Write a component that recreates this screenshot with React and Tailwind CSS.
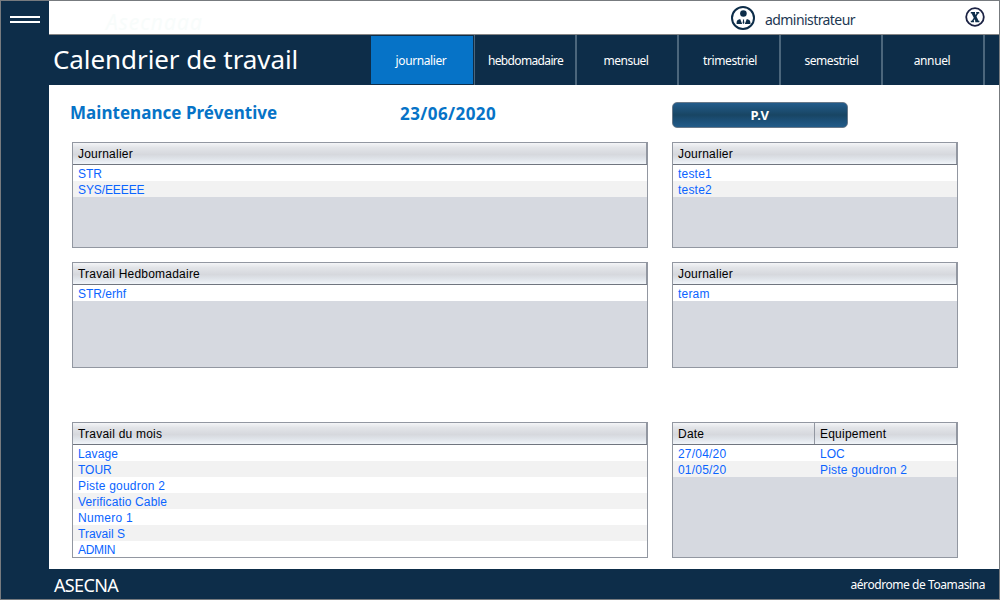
import React from "react";

const tabs = [
  { label: "hebdomadaire", style: "pl-px tracking-[-0.65px]" },
  { label: "mensuel", style: "pr-0.5 tracking-[-0.5px]" },
  { label: "trimestriel", style: "pl-0.5 tracking-[-0.4px]" },
  { label: "semestriel", style: "pl-px tracking-[-0.45px]" },
  { label: "annuel", style: "pr-0.5 tracking-[-0.4px]" },
];

function Table({ columns, rows, className }) {
  return (
    <section
      className={`flex flex-col overflow-hidden border border-[#9297a1] bg-[#d6d9e0] font-['Liberation_Sans',sans-serif] text-xs ${className}`}
    >
      <div className="flex h-[22px] shrink-0 border-b border-[#70757f] bg-[linear-gradient(#f4f5f7_0%,#e2e4e8_22%,#d6d8dd_55%,#dfe3e9_75%,#f1f5f9_100%)]">
        {columns.map((c) => (
          <div
            key={c.label}
            className={`flex items-center border-r border-[#9297a1] pt-px pl-[5px] leading-5 tracking-[0.22px] whitespace-nowrap text-black ${c.width}`}
          >
            {c.label}
          </div>
        ))}
      </div>
      {rows.map((row, i) => (
        <div key={i} className={`flex h-4 shrink-0 ${i % 2 ? "bg-[#f2f2f2]" : "bg-white"}`}>
          {row.map((cell, j) => (
            <div
              key={j}
              className={`pt-px pl-[5px] leading-4 whitespace-nowrap text-[#0a64ff] ${columns[j].width} ${cell.tracking}`}
            >
              {cell.text}
            </div>
          ))}
        </div>
      ))}
    </section>
  );
}

const t = (text, tracking = "tracking-[0.2px]") => ({ text, tracking });

function UserIcon() {
  return (
    <svg width="24" height="24" viewBox="0 0 24 24" className="shrink-0">
      <circle cx="12" cy="12" r="11" fill="white" stroke="#0d2d49" strokeWidth="2" />
      <circle cx="12.4" cy="7.5" r="3.3" fill="#0d2d49" />
      <path d="M5.6 18v-1.6c0-2 1.8-2.8 3.6-3.3l2 4.9zM19.4 18v-1.6c0-2-1.8-2.8-3.6-3.3l-2 4.9zM11.9 13.5h1.2l-.1 1 .4 2.6-.9.9-.9-.9.4-2.6z" fill="#0d2d49" />
    </svg>
  );
}

function CloseIcon() {
  return (
    <svg width="20" height="20" viewBox="0 0 20 20" className="shrink-0">
      <circle cx="10" cy="10" r="8.8" fill="white" stroke="#1c2344" strokeWidth="1.8" />
      <path d="M5.8 5.8h4.2M11.2 5.8h3M5.8 14.4h3.2M10.4 14.4h4" stroke="#0d2d49" strokeWidth="1.5" />
      <path d="M8 5.8l4.2 8.6" stroke="#0d2d49" strokeWidth="3" />
      <path d="M12.8 5.8L7.4 14.4" stroke="#0d2d49" strokeWidth="1.5" />
    </svg>
  );
}

export default function App() {
  return (
    <div className="flex h-[600px] w-[1000px] flex-col overflow-hidden border border-[#777b7f] bg-white font-['Noto_Sans',sans-serif]">
      <div className="flex min-h-0 flex-1">
        <aside className="flex w-12 shrink-0 flex-col gap-[3px] bg-[#0d2d49] pt-[15px] pl-[9px]">
          <span className="h-0.5 w-[30px] bg-white" />
          <span className="h-0.5 w-[30px] bg-white" />
        </aside>
        <div className="flex min-w-0 flex-1 flex-col">
          <header className="flex h-[34px] shrink-0 border-b border-[#858585]">
            <div className="w-[682px] pt-[7px] pl-[57px] text-[21px] leading-7 tracking-[1px] text-[#f8fcfb] italic">Asecnaaa</div>
            <div className="flex flex-1 pt-[5px]">
              <UserIcon />
              <span className="pt-1 pl-[10px] text-sm leading-5 tracking-[-0.57px] text-[#1d3852]">administrateur</span>
            </div>
            <div className="w-[34px] pt-[6px]">
              <CloseIcon />
            </div>
          </header>
          <nav className="flex h-[50px] shrink-0 bg-[#0d2d49] text-white">
            <h1 className="w-[322px] pl-1 text-[26px] leading-[48px] tracking-[-0.08px] whitespace-nowrap">Calendrier de travail</h1>
            <div className="mt-px mb-px flex w-[102px] items-center justify-center bg-[#0673c7] pt-0.5 pr-0.5 text-xs tracking-[-0.4px]">journalier</div>
            <div className="ml-px flex text-xs">
              <span className="w-px bg-[#4b667c]" />
              {tabs.map((tab) => (
                <div key={tab.label} className={`flex w-[102px] items-center justify-center border-r-2 border-[#4b667c] pt-0.5 ${tab.style}`}>
                  {tab.label}
                </div>
              ))}
            </div>
          </nav>
          <main className="flex flex-1 flex-col pl-[23px]">
            <div className="flex h-[57px] text-[17px] leading-6 font-bold text-[#0673c7]">
              <h2 className="-ml-0.5 w-[330px] pt-4 tracking-[0.04px]">Maintenance Préventive</h2>
              <div className="w-[272px] pt-[17px] tracking-[0.42px]">23/06/2020</div>
              <button className="mt-[17px] flex h-[26px] w-44 items-center justify-center rounded-[5px] border border-[#68798a] bg-[linear-gradient(#235c8b_0%,#184563_50%,#1c5078_75%,#225b88_100%)] text-[13px] tracking-[0.4px] text-white">P.V</button>
            </div>
            <div className="grid grid-cols-[576px_286px] grid-rows-[106px_120px_204px] gap-x-6">
              <Table className="h-[106px]" columns={[{ label: "Journalier", width: "w-full" }]} rows={[[t("STR", "")], [t("SYS/EEEEE", "tracking-[-0.1px]")]]} />
              <Table className="h-[106px]" columns={[{ label: "Journalier", width: "w-full" }]} rows={[[t("teste1")], [t("teste2")]]} />
              <Table className="mt-3.5 h-[106px]" columns={[{ label: "Travail Hedbomadaire", width: "w-full" }]} rows={[[t("STR/erhf", "")]]} />
              <Table className="mt-3.5 h-[106px]" columns={[{ label: "Journalier", width: "w-full" }]} rows={[[t("teram")]]} />
              <Table
                className="mt-[54px] h-[136px]"
                columns={[{ label: "Travail du mois", width: "w-full" }]}
                rows={[[t("Lavage", "tracking-[0.1px]")], [t("TOUR", "")], [t("Piste goudron 2")], [t("Verificatio Cable", "tracking-[0.14px]")], [t("Numero 1", "tracking-[0.3px]")], [t("Travail S", "")], [t("ADMIN", "tracking-[-0.3px]")]]}
              />
              <Table
                className="mt-[54px] h-[136px]"
                columns={[{ label: "Date", width: "w-[142px]" }, { label: "Equipement", width: "w-[142px]" }]}
                rows={[[t("27/04/20"), t("LOC", "")], [t("01/05/20"), t("Piste goudron 2")]]}
              />
            </div>
          </main>
        </div>
      </div>
      <footer className="flex h-[30px] shrink-0 items-center justify-between bg-[#0d2d49] pt-px pr-3.5 pl-[53px] text-white">
        <span className="text-[18px] leading-7 tracking-[-0.65px]">ASECNA</span>
        <span className="text-xs tracking-[-0.43px]">aérodrome de Toamasina</span>
      </footer>
    </div>
  );
}
